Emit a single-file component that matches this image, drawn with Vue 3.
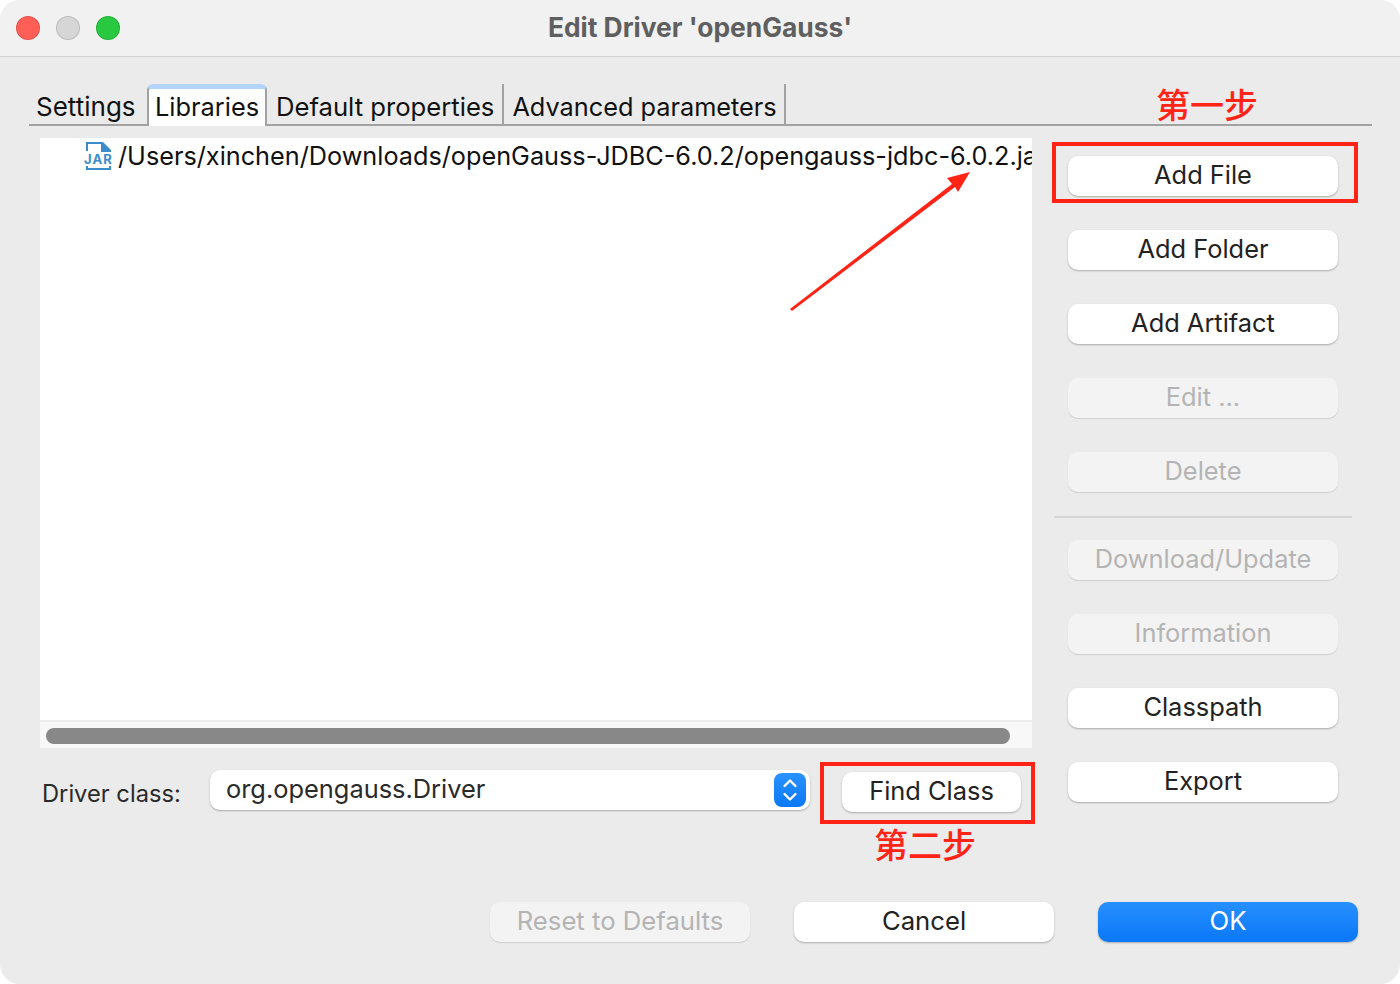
<script setup>
const tabs = [
  { name: "Settings", cls: "plain" },
  { name: "Libraries", cls: "active" },
  { name: "Default properties", cls: "sep" },
  { name: "Advanced parameters", cls: "sep" },
];
const groupOne = [
  { label: "Add File" },
  { label: "Add Folder" },
  { label: "Add Artifact" },
  { label: "Edit ...", off: true },
  { label: "Delete", off: true },
];
const groupTwo = [
  { label: "Download/Update", off: true },
  { label: "Information", off: true },
  { label: "Classpath" },
  { label: "Export" },
];
</script>

<template>
  <div class="window">
    <header class="titlebar">
      <div class="lights">
        <span class="light red"></span>
        <span class="light grey"></span>
        <span class="light green"></span>
      </div>
      <div class="title">Edit Driver 'openGauss'</div>
    </header>

    <div class="content">
      <div class="tabs">
        <div v-for="tab in tabs" :key="tab.name" class="tab" :class="tab.cls">{{ tab.name }}</div>
      </div>

      <div class="main">
        <div class="left">
          <div class="list">
            <div class="row">
              <svg class="jar" width="28" height="28" viewBox="0 0 28 28">
                <path d="M3 9V1h15M3 24v3h23v-3M26 8v1" fill="none" stroke="#3b8ccb" stroke-width="2" />
                <path d="M17 0h2l8 8v2H17z" fill="#3b8ccb" />
                <text x="14.5" y="22" text-anchor="middle" class="jar-text">JAR</text>
              </svg>
              <span class="path">/Users/xinchen/Downloads/openGauss-JDBC-6.0.2/opengauss-jdbc-6.0.2.jar</span>
            </div>
          </div>
          <div class="track"><div class="thumb"></div></div>

          <div class="driver">
            <label class="driver-label">Driver class:</label>
            <div class="combo">
              <span class="combo-text">org.opengauss.Driver</span>
              <span class="stepper">
                <svg width="16" height="28" viewBox="0 0 16 28">
                  <path d="M2.5 10l5.5-5.5 5.5 5.5M2.5 18l5.5 5.5 5.5-5.5" fill="none" stroke="#fff" stroke-width="2.4" stroke-linecap="round" stroke-linejoin="round" />
                </svg>
              </span>
            </div>
            <button class="btn find">Find Class</button>
          </div>
        </div>

        <div class="side">
          <div class="group">
            <button v-for="b in groupOne" :key="b.label" class="btn" :class="{ off: b.off }">{{ b.label }}</button>
          </div>
          <div class="divider"></div>
          <div class="group">
            <button v-for="b in groupTwo" :key="b.label" class="btn" :class="{ off: b.off }">{{ b.label }}</button>
          </div>
        </div>
      </div>

      <div class="footer">
        <button class="btn wide off">Reset to Defaults</button>
        <button class="btn wide">Cancel</button>
        <button class="btn wide primary">OK</button>
      </div>
    </div>

    <!-- red notes drawn on top of the shot -->
    <div class="note step1">第一步</div>
    <div class="note step2">第二步</div>
    <div class="box box1"></div>
    <div class="box box2"></div>
    <svg class="arrow" width="190" height="146" viewBox="0 0 190 146">
      <polygon points="0,137 162,12 157,6 180,0 168,20 165,15 2,139" fill="#ff2416" />
    </svg>
  </div>
</template>

<style>
html,
body {
  margin: 0;
  background: #fff;
}
</style>

<style scoped>
.window {
  position: relative;
  width: 1400px;
  height: 984px;
  border-radius: 20px;
  overflow: hidden;
  background: #ebebeb;
  display: flex;
  flex-direction: column;
  font-family: Inter, "Liberation Sans", "Noto Sans CJK SC", sans-serif;
  font-size: 25.4px;
  color: #1e1e1e;
}

.titlebar {
  height: 56px;
  flex: none;
  display: flex;
  align-items: center;
  justify-content: center;
  position: relative;
  background: #f1f1f1;
  border-bottom: 1px solid #d2d2d2;
}

.title {
  font-size: 26.4px;
  font-weight: 700;
  color: #5f5f5f;
  margin-top: -2px;
}

.lights {
  position: absolute;
  left: 16px;
  top: 16px;
  display: flex;
  gap: 16px;
}

.light {
  width: 24px;
  height: 24px;
  border-radius: 50%;
  box-sizing: border-box;
  border: 1px solid rgba(0, 0, 0, 0.12);
}

.red {
  background: #ff5f57;
}

.grey {
  background: #d6d6d6;
}

.green {
  background: #28c840;
}

.content {
  flex: 1;
  display: flex;
  flex-direction: column;
  padding: 27px 0 42px;
  min-height: 0;
}

.tabs {
  height: 40px;
  margin: 0 28px 0 29px;
  padding-left: 7px;
  display: flex;
  border-bottom: 2px solid #a2a2a2;
  color: #111;
}

.tab {
  display: flex;
  align-items: flex-end;
  padding-bottom: 1px;
  line-height: 32px;
  white-space: nowrap;
}

.plain {
  width: 111px;
  font-size: 26px;
}

.active {
  width: 120px;
  box-sizing: border-box;
  position: relative;
  justify-content: center;
  background: #fff;
  border: 2px solid #a2a2a2;
  border-top: 5px solid #b3d4fb;
  border-bottom: 0;
  border-radius: 6px 6px 0 0;
  margin-bottom: -2px;
  padding-bottom: 3px;
}

.sep {
  padding: 0 7px 1px 8px;
  border-right: 2px solid #a2a2a2;
  font-size: 25.3px;
}

.active + .sep {
  padding: 0 8px 1px 9px;
  font-size: 25.65px;
}

.main {
  display: flex;
  padding-left: 40px;
  gap: 22px;
}

.left {
  width: 992px;
  flex: none;
  padding-top: 12px;
}

.list {
  height: 582px;
  background: #fff;
  overflow: hidden;
}

.row {
  display: flex;
  align-items: center;
  gap: 6px;
  padding: 4px 0 0 44px;
  height: 28px;
  width: 1000px;
  overflow: hidden;
}

.jar {
  flex: none;
}

.jar-text {
  font-family: Inter, sans-serif;
  font-size: 13px;
  font-weight: 700;
  letter-spacing: 1.2px;
  fill: #3b8ccb;
}

.path {
  white-space: nowrap;
  color: #111;
  font-size: 25.26px;
}

.track {
  height: 26px;
  margin-top: 2px;
  padding: 6px 22px 4px 6px;
  box-sizing: border-box;
  background: #f8f8f8;
}

.thumb {
  height: 16px;
  border-radius: 8px;
  background: #888;
}

.driver {
  display: flex;
  margin-top: 22px;
  position: relative;
}

.driver-label {
  width: 168px;
  padding-left: 2px;
  flex: none;
  line-height: 48px;
  font-size: 23.7px;
  color: #2a2a2a;
}

.combo {
  width: 600px;
  height: 40px;
  flex: none;
  box-sizing: border-box;
  padding: 0 4px 0 16px;
  display: flex;
  align-items: center;
  justify-content: space-between;
  background: #fff;
  border-radius: 10px;
  box-shadow: 0 1px 2px rgba(0, 0, 0, 0.28);
  color: #2a2a2a;
}

.combo-text {
  margin-top: -4px;
}

.stepper {
  width: 32px;
  height: 34px;
  border-radius: 8px;
  display: flex;
  align-items: center;
  justify-content: center;
  background: linear-gradient(#2a92ff, #0a78f5);
}

.btn {
  display: block;
  width: 270px;
  height: 40px;
  padding: 0 0 4px;
  border: 0;
  border-radius: 10px;
  background: #fff;
  box-shadow: 0 1px 2px rgba(0, 0, 0, 0.28);
  font: inherit;
  color: #222;
  text-align: center;
}

.find {
  width: 179px;
  margin: 2px 0 0 32px;
}

.side {
  width: 298px;
  flex: none;
  padding-top: 30px;
}

.group {
  display: flex;
  flex-direction: column;
  gap: 34px;
  padding-left: 14px;
}

.divider {
  height: 2px;
  margin: 24px 0 22px;
  background: #d6d6d6;
}

.off {
  background: #f3f3f3;
  color: #b4b4b4;
  box-shadow: 0 1px 1px rgba(0, 0, 0, 0.12);
}

.footer {
  margin-top: auto;
  padding-right: 42px;
  display: flex;
  justify-content: flex-end;
  gap: 44px;
}

.wide {
  width: 260px;
  font-size: 25.7px;
}

.primary {
  background: linear-gradient(#2790ff, #0a77f7);
  color: #fff;
}

.note {
  position: absolute;
  font-size: 34px;
  font-weight: 500;
  line-height: 36px;
  color: #ff2416;
  font-family: "Noto Sans CJK SC", sans-serif;
  white-space: nowrap;
}

.step1 {
  left: 1156px;
  top: 86px;
}

.step2 {
  left: 874px;
  top: 826px;
}

.box {
  position: absolute;
  box-sizing: border-box;
  border: 4px solid #ff2416;
}

.box1 {
  left: 1052px;
  top: 142px;
  width: 306px;
  height: 61px;
}

.box2 {
  left: 820px;
  top: 762px;
  width: 215px;
  height: 62px;
}

.arrow {
  position: absolute;
  left: 790px;
  top: 172px;
}
</style>
